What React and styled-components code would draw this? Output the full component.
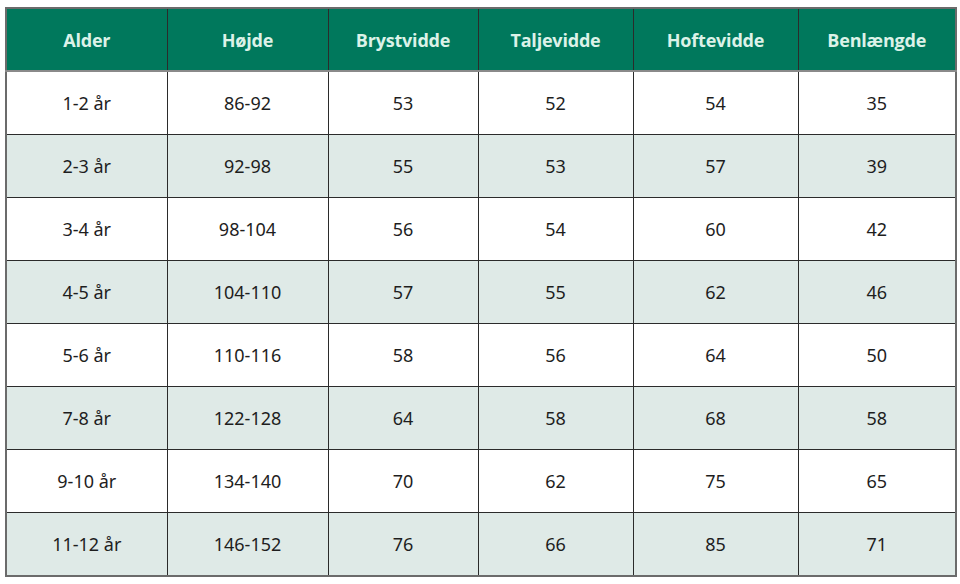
import React from 'react';
import styled, { createGlobalStyle } from 'styled-components';

const GlobalStyle = createGlobalStyle`
  body {
    margin: 0;
    background: #ffffff;
  }
`;

const Page = styled.div`
  width: 960px;
  height: 584px;
  padding: 7px 5px 0 5px;
  box-sizing: border-box;
`;

const Table = styled.table`
  width: 950px;
  border-collapse: collapse;
  table-layout: fixed;
  border: 2px solid #6b6b6b;
`;

const HeadCell = styled.th`
  height: 61px;
  background: #00785c;
  color: #dcf2e8;
  font-family: 'Open Sans', 'Noto Sans', sans-serif;
  font-weight: 700;
  font-size: 18px;
  letter-spacing: -0.2px;
  text-align: center;
  border-left: 1px solid #2b2b2b;
  border-bottom: 2px solid #8a8a8a;
  padding: 0;
  &:first-child {
    border-left: none;
  }
`;

const Row = styled.tr`
  background: ${props => (props.alt ? '#dfeae7' : '#ffffff')};
`;

const Cell = styled.td`
  height: 62px;
  font-family: 'Noto Sans', 'Open Sans', sans-serif;
  font-size: 18px;
  color: #1e1e1e;
  text-align: center;
  border-left: 1px solid #2b2b2b;
  border-top: 1px solid #2b2b2b;
  padding: 0;
  &:first-child {
    border-left: none;
  }
`;

const columns = [
  { label: 'Alder', width: 161 },
  { label: 'Højde', width: 161 },
  { label: 'Brystvidde', width: 150 },
  { label: 'Taljevidde', width: 155 },
  { label: 'Hoftevidde', width: 165 },
  { label: 'Benlængde', width: 158 },
];

const rows = [
  ['1-2 år', '86-92', '53', '52', '54', '35'],
  ['2-3 år', '92-98', '55', '53', '57', '39'],
  ['3-4 år', '98-104', '56', '54', '60', '42'],
  ['4-5 år', '104-110', '57', '55', '62', '46'],
  ['5-6 år', '110-116', '58', '56', '64', '50'],
  ['7-8 år', '122-128', '64', '58', '68', '58'],
  ['9-10 år', '134-140', '70', '62', '75', '65'],
  ['11-12 år', '146-152', '76', '66', '85', '71'],
];

export default function App() {
  return (
    <>
      <GlobalStyle />
      <Page>
        <Table>
          <colgroup>
            {columns.map(c => (
              <col key={c.label} style={{ width: c.width }} />
            ))}
          </colgroup>
          <thead>
            <tr>
              {columns.map(c => (
                <HeadCell key={c.label}>{c.label}</HeadCell>
              ))}
            </tr>
          </thead>
          <tbody>
            {rows.map((r, i) => (
              <Row key={r[0]} alt={i % 2 === 1}>
                {r.map((v, j) => (
                  <Cell key={j}>{v}</Cell>
                ))}
              </Row>
            ))}
          </tbody>
        </Table>
      </Page>
    </>
  );
}
